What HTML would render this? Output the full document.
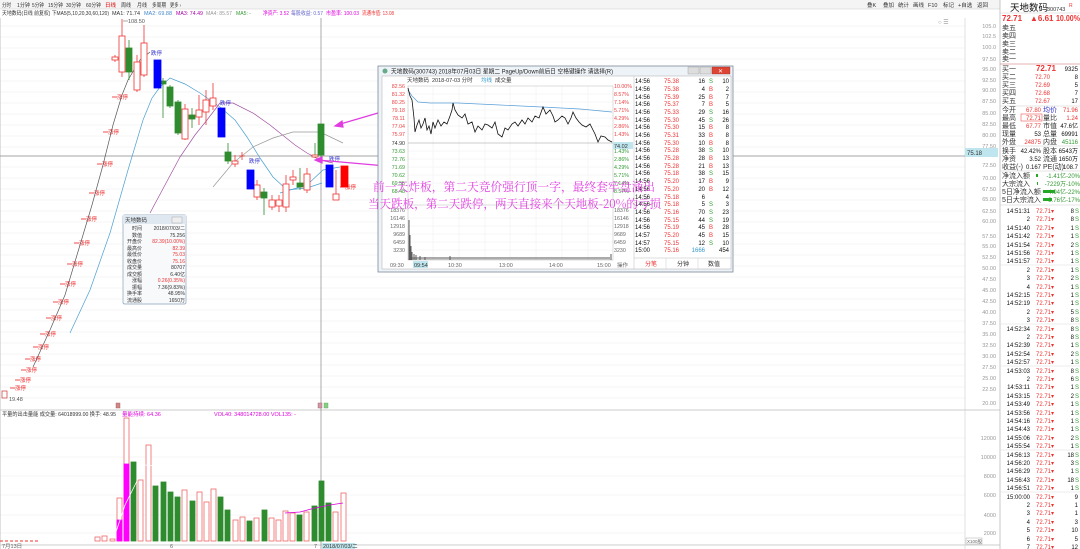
<!DOCTYPE html>
<html><head><meta charset="utf-8">
<style>
html,body{margin:0;padding:0;background:#fff;width:1080px;height:549px;overflow:hidden}
svg{display:block;font-family:"Liberation Sans","Noto Sans CJK SC",sans-serif}
</style></head><body>
<svg width="1080" height="549" viewBox="0 0 1080 549" xmlns="http://www.w3.org/2000/svg">
<rect width="1080" height="549" fill="#fff"/>
<rect x="0" y="0" width="1000" height="9" fill="#f4f4f4"/>
<line x1="0" y1="9" x2="1000" y2="9" stroke="#ccc" stroke-width="0.6"/>
<g font-size="5.5" fill="#333" lengthAdjust="spacingAndGlyphs">
<text x="2" y="7" textLength="9" lengthAdjust="spacingAndGlyphs">分时</text><text x="17" y="7" textLength="13" lengthAdjust="spacingAndGlyphs">1分钟</text><text x="32" y="7" textLength="12" lengthAdjust="spacingAndGlyphs">5分钟</text><text x="48" y="7" textLength="15" lengthAdjust="spacingAndGlyphs">15分钟</text><text x="66" y="7" textLength="15" lengthAdjust="spacingAndGlyphs">30分钟</text><text x="86" y="7" textLength="15" lengthAdjust="spacingAndGlyphs">60分钟</text>
<text x="105" y="7" fill="#d00" textLength="11" lengthAdjust="spacingAndGlyphs">日线</text><text x="121" y="7" textLength="10" lengthAdjust="spacingAndGlyphs">周线</text><text x="137" y="7" textLength="10" lengthAdjust="spacingAndGlyphs">月线</text><text x="152" y="7" textLength="14" lengthAdjust="spacingAndGlyphs">多周期</text><text x="170" y="7" textLength="11" lengthAdjust="spacingAndGlyphs">更多 ›</text>
<text x="867" y="7">叠K</text><text x="883" y="7">叠加</text><text x="898" y="7">统计</text><text x="913" y="7">画线</text><text x="928" y="7">F10</text><text x="943" y="7">标记</text><text x="958" y="7">+自选</text><text x="977" y="7">返回</text>
</g>
<g font-size="5.5">
<text x="2" y="15" fill="#333" textLength="107" lengthAdjust="spacingAndGlyphs">天地数码(日线 前复权) 下MA5(5,10,20,30,60,120)</text>
<text x="112" y="15" fill="#333" textLength="28" lengthAdjust="spacingAndGlyphs">MA1: 71.74</text>
<text x="144" y="15" fill="#48c" textLength="28" lengthAdjust="spacingAndGlyphs">MA2: 69.88</text>
<text x="176" y="15" fill="#a0a" textLength="27" lengthAdjust="spacingAndGlyphs">MA3: 74.49</text>
<text x="206" y="15" fill="#999" textLength="26" lengthAdjust="spacingAndGlyphs">MA4: 85.57</text>
<text x="219" y="15" fill="#393" textLength="0"></text>
<text x="236" y="15" fill="#393" textLength="15" lengthAdjust="spacingAndGlyphs">MA5: -</text>
<text x="253" y="15" fill="#6cc" textLength="0"></text>
<text x="263" y="15" fill="#d0d" textLength="26" lengthAdjust="spacingAndGlyphs">净资产: 3.52</text>
<text x="291" y="15" fill="#66c" textLength="32" lengthAdjust="spacingAndGlyphs">每股收益: 0.57</text>
<text x="326" y="15" fill="#d0d" textLength="33" lengthAdjust="spacingAndGlyphs">市盈率: 100.03</text>
<text x="362" y="15" fill="#e33" textLength="32" lengthAdjust="spacingAndGlyphs">流通市值: 13.08</text>
</g>
<text x="938" y="24" font-size="6" fill="#999">○ ☰</text>
<g stroke="#eee" stroke-width="0.6">
<line x1="0" y1="26" x2="965" y2="26"/><line x1="0" y1="37" x2="965" y2="37"/><line x1="0" y1="48" x2="965" y2="48"/><line x1="0" y1="59" x2="965" y2="59"/><line x1="0" y1="70" x2="965" y2="70"/><line x1="0" y1="81" x2="965" y2="81"/><line x1="0" y1="92" x2="965" y2="92"/><line x1="0" y1="103" x2="965" y2="103"/><line x1="0" y1="114" x2="965" y2="114"/><line x1="0" y1="125" x2="965" y2="125"/><line x1="0" y1="136" x2="965" y2="136"/><line x1="0" y1="147" x2="965" y2="147"/><line x1="0" y1="167" x2="965" y2="167"/><line x1="0" y1="178" x2="965" y2="178"/><line x1="0" y1="189" x2="965" y2="189"/><line x1="0" y1="200" x2="965" y2="200"/><line x1="0" y1="211" x2="965" y2="211"/><line x1="0" y1="222" x2="965" y2="222"/><line x1="0" y1="233" x2="965" y2="233"/><line x1="0" y1="244" x2="965" y2="244"/><line x1="0" y1="255" x2="965" y2="255"/><line x1="0" y1="266" x2="965" y2="266"/><line x1="0" y1="277" x2="965" y2="277"/><line x1="0" y1="288" x2="965" y2="288"/><line x1="0" y1="299" x2="965" y2="299"/><line x1="0" y1="310" x2="965" y2="310"/><line x1="0" y1="321" x2="965" y2="321"/><line x1="0" y1="332" x2="965" y2="332"/><line x1="0" y1="343" x2="965" y2="343"/><line x1="0" y1="354" x2="965" y2="354"/><line x1="0" y1="365" x2="965" y2="365"/><line x1="0" y1="376" x2="965" y2="376"/><line x1="0" y1="387" x2="965" y2="387"/><line x1="0" y1="398" x2="965" y2="398"/>
<line x1="0" y1="438" x2="965" y2="438"/><line x1="0" y1="457" x2="965" y2="457"/><line x1="0" y1="476" x2="965" y2="476"/><line x1="0" y1="495" x2="965" y2="495"/><line x1="0" y1="515" x2="965" y2="515"/><line x1="0" y1="533" x2="965" y2="533"/>
</g>
<line x1="0" y1="410" x2="1000" y2="410" stroke="#bbb" stroke-width="0.8"/>
<line x1="0" y1="545" x2="1000" y2="545" stroke="#bbb" stroke-width="0.8"/>
<line x1="965" y1="18" x2="965" y2="549" stroke="#ccc" stroke-width="0.6"/>
<line x1="1000" y1="0" x2="1000" y2="549" stroke="#bbb" stroke-width="0.8"/>
<line x1="0.5" y1="18" x2="0.5" y2="549" stroke="#ccc" stroke-width="0.6"/>
<line x1="321" y1="18" x2="321" y2="549" stroke="#888" stroke-width="0.7"/>
<line x1="0" y1="156" x2="965" y2="156" stroke="#888" stroke-width="0.7"/>
<g font-size="5.5" fill="#999" text-anchor="end">
<text x="996" y="28">105.0</text><text x="996" y="38">102.5</text><text x="996" y="49">100.0</text><text x="996" y="61">97.50</text><text x="996" y="71">95.00</text><text x="996" y="82">92.50</text><text x="996" y="92">90.00</text><text x="996" y="103">87.50</text><text x="996" y="115">85.00</text><text x="996" y="126">82.50</text><text x="996" y="137">80.00</text><text x="996" y="148">77.50</text><text x="996" y="167">72.50</text><text x="996" y="180">70.00</text><text x="996" y="191">67.50</text><text x="996" y="201">65.00</text><text x="996" y="213">62.50</text><text x="996" y="223">60.00</text><text x="996" y="238">57.50</text><text x="996" y="248">55.00</text><text x="996" y="259">52.50</text><text x="996" y="270">50.00</text><text x="996" y="281">47.50</text><text x="996" y="292">45.00</text><text x="996" y="303">42.50</text><text x="996" y="314">40.00</text><text x="996" y="325">37.50</text><text x="996" y="336">35.00</text><text x="996" y="347">32.50</text><text x="996" y="358">30.00</text><text x="996" y="369">27.50</text><text x="996" y="380">25.00</text><text x="996" y="391">22.50</text><text x="996" y="405">20.00</text>
<text x="996" y="440">12000</text><text x="996" y="459">10000</text><text x="996" y="478">8000</text><text x="996" y="497">6000</text><text x="996" y="517">4000</text><text x="996" y="535">2000</text>
</g>
<rect x="965" y="148" width="33" height="9" fill="#bfe6ee"/>
<text x="967" y="155" font-size="6" fill="#333">75.18</text>
<rect x="966" y="538" width="16" height="6" fill="#fff" stroke="#999" stroke-width="0.4"/><text x="967" y="543" font-size="4.5" fill="#666">X100股</text>
<g font-size="5.5" fill="#e22">
<g stroke="#e22" stroke-width="0.8">
<line x1="112" y1="97" x2="117" y2="97"/><line x1="103" y1="132" x2="108" y2="132"/><line x1="97" y1="164" x2="102" y2="164"/><line x1="89" y1="193" x2="94" y2="193"/><line x1="81" y1="219" x2="86" y2="219"/><line x1="74" y1="243" x2="79" y2="243"/><line x1="67" y1="264" x2="72" y2="264"/><line x1="60" y1="284" x2="65" y2="284"/><line x1="53" y1="302" x2="58" y2="302"/><line x1="46" y1="318" x2="51" y2="318"/><line x1="40" y1="334" x2="45" y2="334"/><line x1="33" y1="347" x2="38" y2="347"/><line x1="25" y1="359" x2="30" y2="359"/><line x1="21" y1="370" x2="26" y2="370"/><line x1="15" y1="380" x2="20" y2="380"/><line x1="10" y1="388" x2="15" y2="388"/><line x1="340" y1="187" x2="345" y2="187"/>
</g>
<text x="117" y="99">涨停</text><text x="108" y="134">涨停</text><text x="102" y="166">涨停</text><text x="94" y="195">涨停</text><text x="86" y="221">涨停</text><text x="79" y="245">涨停</text><text x="72" y="266">涨停</text><text x="65" y="286">涨停</text><text x="58" y="304">涨停</text><text x="51" y="320">涨停</text><text x="45" y="336">涨停</text><text x="38" y="349">涨停</text><text x="30" y="361">涨停</text><text x="26" y="372">涨停</text><text x="20" y="382">涨停</text><text x="15" y="390">涨停</text><text x="345" y="189">涨停</text>
</g>
<rect x="2" y="391" width="5" height="7" fill="#fff" stroke="#c33" stroke-width="0.7"/>
<text x="9" y="401" font-size="5.5" fill="#555">19.48</text>
<text x="128" y="23" font-size="5.5" fill="#555">108.50</text>
<line x1="123" y1="21" x2="128" y2="21" stroke="#555" stroke-width="0.5"/>
<g fill="none" stroke-width="0.7">
<polyline stroke="#555" points="33,367 50,330 65,295 80,245 92,205 103,165 113,125 122,95 128,80 140,60 150,52"/>
<polyline stroke="#4a9fd0" points="70,333 90,290 110,233 128,170 143,120 152,98 160,87 170,78 185,84 200,93 220,107 235,120 247,137 260,158 273,177 287,190 307,188 322,183"/>
<polyline stroke="#a050a0" points="150,213 165,185 180,157 195,135 207,120 220,103 233,103 253,113 270,125 280,133 295,145 307,153 320,160 333,163"/>
<polyline stroke="#999" points="213,187 233,163 253,147 273,138 293,132 320,132 343,143"/>
<polyline stroke="#4a9fd0" points="280,193 307,185 323,170 340,167"/>
</g>
<g stroke-width="0.8">
<g stroke="#e33">
<line x1="122" y1="19" x2="122" y2="77"/><line x1="137" y1="55" x2="137" y2="92"/><line x1="144" y1="25" x2="144" y2="77"/><line x1="185" y1="104" x2="185" y2="140"/><line x1="199" y1="95" x2="199" y2="125"/><line x1="206" y1="90" x2="206" y2="125"/><line x1="213" y1="83" x2="213" y2="110"/><line x1="235" y1="155" x2="235" y2="167"/><line x1="257" y1="180" x2="257" y2="200"/><line x1="272" y1="195" x2="272" y2="210"/><line x1="279" y1="195" x2="279" y2="212"/><line x1="286" y1="175" x2="286" y2="212"/><line x1="293" y1="170" x2="293" y2="185"/><line x1="307" y1="168" x2="307" y2="193"/><line x1="336" y1="170" x2="336" y2="200"/><line x1="115" y1="55" x2="115" y2="62"/>
</g>
<g stroke="#2e8b2e">
<line x1="129" y1="40" x2="129" y2="80"/><line x1="163" y1="78" x2="163" y2="118"/><line x1="170" y1="85" x2="170" y2="108"/><line x1="178" y1="100" x2="178" y2="135"/><line x1="192" y1="108" x2="192" y2="128"/><line x1="228" y1="143" x2="228" y2="164"/><line x1="264" y1="188" x2="264" y2="215"/><line x1="300" y1="168" x2="300" y2="190"/><line x1="315" y1="143" x2="315" y2="158"/><line x1="321" y1="124" x2="321" y2="158"/>
</g>
<g fill="#fff" stroke="#e33">
<rect x="119" y="36" width="6" height="36"/><rect x="134" y="62" width="6" height="28"/><rect x="141" y="43" width="6" height="32"/><rect x="182" y="109" width="6" height="30"/><rect x="196" y="110" width="6" height="7"/><rect x="203" y="100" width="6" height="12"/><rect x="210" y="98" width="6" height="8"/><rect x="232" y="161" width="6" height="3"/><rect x="254" y="185" width="6" height="12"/><rect x="269" y="200" width="6" height="7"/><rect x="276" y="200" width="6" height="6"/><rect x="283" y="184" width="6" height="23"/><rect x="290" y="177" width="6" height="3"/><rect x="304" y="174" width="6" height="16"/><rect x="333" y="194" width="6" height="6"/><rect x="112" y="57" width="6" height="3"/><rect x="312" y="155" width="6" height="2"/>
</g>
<g fill="#2e8b2e" stroke="#2e8b2e">
<rect x="126" y="48" width="6" height="24"/><rect x="160" y="81" width="6" height="3"/><rect x="167" y="87" width="6" height="19"/><rect x="175" y="102" width="6" height="31"/><rect x="189" y="115" width="6" height="4"/><rect x="225" y="152" width="6" height="9"/><rect x="261" y="192" width="6" height="6"/><rect x="297" y="183" width="6" height="4"/><rect x="318" y="124" width="6" height="31"/>
</g>
<line x1="239" y1="156" x2="245" y2="156" stroke="#e33"/><line x1="242" y1="152" x2="242" y2="160" stroke="#e33"/>
<g fill="#00f" stroke="#00f"><rect x="154" y="60" width="7" height="28"/><rect x="218" y="108" width="7" height="29"/><rect x="247" y="170" width="7" height="19"/><rect x="326" y="165" width="7" height="22"/></g>
<rect x="341" y="166" width="7" height="21" fill="#f00" stroke="#f00"/>
</g>
<g font-size="5.5" fill="#33c"><text x="151" y="55">跌停</text><text x="220" y="105">跌停</text><text x="249" y="163">跌停</text><text x="329" y="161">跌停</text></g>
<g>
<rect x="123" y="215" width="63" height="89" fill="#f7f9fb" stroke="#8aa0b8" stroke-width="0.7" rx="1.5"/>
<rect x="123" y="215" width="63" height="9" fill="#dfe7f0"/>
<text x="125" y="222" font-size="5.5" fill="#333">天地数码</text>
<rect x="172" y="217" width="10" height="6" fill="#eee" stroke="#999" stroke-width="0.4"/>
<g font-size="5" fill="#333">
<text x="142" y="230" text-anchor="end">时间</text><text x="142" y="237" text-anchor="end">数值</text><text x="142" y="243" text-anchor="end">开盘价</text><text x="142" y="250" text-anchor="end">最高价</text><text x="142" y="256" text-anchor="end">最低价</text><text x="142" y="263" text-anchor="end">收盘价</text><text x="142" y="269" text-anchor="end">成交量</text><text x="142" y="276" text-anchor="end">成交额</text><text x="142" y="282" text-anchor="end">涨幅</text><text x="142" y="289" text-anchor="end">振幅</text><text x="142" y="295" text-anchor="end">换手率</text><text x="142" y="302" text-anchor="end">流通股</text>
<text x="185" y="230" text-anchor="end">2018/07/03/二</text><text x="185" y="237" text-anchor="end">75.256</text>
<text x="185" y="243" text-anchor="end" fill="#e33">82.39(10.00%)</text><text x="185" y="250" text-anchor="end" fill="#e33">82.39</text><text x="185" y="256" text-anchor="end" fill="#e33">75.03</text><text x="185" y="263" text-anchor="end" fill="#e33">75.16</text>
<text x="185" y="269" text-anchor="end">80707</text><text x="185" y="276" text-anchor="end">6.40亿</text><text x="185" y="282" text-anchor="end" fill="#e33">0.26(0.35%)</text><text x="185" y="289" text-anchor="end">7.36(9.83%)</text><text x="185" y="295" text-anchor="end">48.95%</text><text x="185" y="302" text-anchor="end">1650万</text>
</g></g>
<g font-size="5.5"><text x="2" y="416" fill="#333" textLength="114" lengthAdjust="spacingAndGlyphs">平量的出击量能  成交量: 64018999.00 换手: 48.95</text><text x="122" y="416" fill="#d0d">量能持续: 64.36</text><text x="214" y="416" fill="#d0d">VOL40: 348014728.00 VOL135: -</text></g>
<rect x="116" y="403" width="4" height="5" fill="#c88" stroke="#a55" stroke-width="0.4"/>
<rect x="318" y="403" width="4" height="5" fill="#c9a" stroke="#a55" stroke-width="0.4"/><rect x="324" y="403" width="4" height="5" fill="#8c8" stroke="#5a5" stroke-width="0.4"/>
<g stroke-width="0.8">
<g fill="#fff" stroke="#e66">
<rect x="117" y="498" width="5" height="43"/><rect x="124" y="418" width="5" height="123"/><rect x="138" y="480" width="5" height="61"/><rect x="146" y="445" width="5" height="96"/><rect x="182" y="490" width="5" height="51"/><rect x="197" y="492" width="5" height="49"/><rect x="204" y="502" width="5" height="39"/><rect x="211" y="489" width="5" height="52"/><rect x="233" y="520" width="5" height="21"/><rect x="240" y="517" width="5" height="24"/><rect x="254" y="518" width="5" height="23"/><rect x="269" y="518" width="5" height="23"/><rect x="276" y="520" width="5" height="21"/><rect x="283" y="511" width="5" height="30"/><rect x="290" y="513" width="5" height="28"/><rect x="304" y="512" width="5" height="29"/><rect x="333" y="512" width="5" height="29"/><rect x="341" y="493" width="5" height="48"/><rect x="95" y="537" width="5" height="4"/><rect x="102" y="536" width="5" height="5"/><rect x="110" y="539" width="5" height="2"/>
</g>
<rect x="117" y="520" width="5" height="21" fill="#f0f" stroke="#f0f"/>
<rect x="124" y="464" width="5" height="77" fill="#f0f" stroke="#f0f"/>
<g fill="#2e8b2e" stroke="#2e8b2e">
<rect x="131" y="462" width="5" height="79"/><rect x="153" y="486" width="5" height="55"/><rect x="161" y="482" width="5" height="59"/><rect x="168" y="492" width="5" height="49"/><rect x="175" y="497" width="5" height="44"/><rect x="190" y="501" width="5" height="40"/><rect x="218" y="497" width="5" height="44"/><rect x="225" y="510" width="5" height="31"/><rect x="247" y="521" width="5" height="20"/><rect x="262" y="510" width="5" height="31"/><rect x="297" y="515" width="5" height="26"/><rect x="312" y="506" width="5" height="35"/><rect x="319" y="481" width="5" height="60"/><rect x="326" y="503" width="5" height="38"/>
</g>
</g>
<line x1="0" y1="541" x2="40" y2="541" stroke="#e33" stroke-width="1" stroke-dasharray="3,2"/>
<polyline fill="none" stroke="#d0d" stroke-width="0.8" points="285,513 300,512 315,508 330,505 343,503"/>
<polyline fill="none" stroke="#fff" stroke-width="0.8" points="115,535 125,505 135,485 145,465 155,466"/>
<g font-size="5.5" fill="#666"><text x="2" y="548">7月13日</text><text x="170" y="548">6</text><text x="314" y="548">7</text></g>
<rect x="322" y="543" width="33" height="6" fill="#bfe6ee"/><text x="323" y="548" font-size="5.5" fill="#333">2018/07/03/二</text>
<g stroke="#e03ce0" stroke-width="1.2" fill="#e03ce0">
<line x1="378" y1="113" x2="337" y2="125"/><polygon points="335,126 342,121 343,127"/>
<line x1="455" y1="172" x2="318" y2="160"/><polygon points="315,160 322,157 322,163"/>
</g>
<g>
<rect x="378" y="66" width="355" height="206" fill="#eef3f8" stroke="#7a8a9a" stroke-width="0.8"/>
<text x="391" y="73.5" font-size="6" fill="#222" textLength="222" lengthAdjust="spacingAndGlyphs">天地数码(300743) 2018年07月03日 星期二 PageUp/Down前后日 空格键操作 请选择(R)</text>
<circle cx="385" cy="71" r="2.5" fill="#6a8"/>
<rect x="688" y="67" width="11" height="7" fill="#ddd" stroke="#999" stroke-width="0.4"/><rect x="700" y="67" width="11" height="7" fill="#ddd" stroke="#999" stroke-width="0.4"/><rect x="712" y="67" width="18" height="7" fill="#d43" stroke="#933" stroke-width="0.4"/>
<text x="718" y="73" font-size="6" fill="#fff">✕</text>
<rect x="382" y="76" width="349" height="193" fill="#fff" stroke="#aaa" stroke-width="0.5"/>
<g font-size="5.5" fill="#333"><text x="407" y="82">天地数码</text><text x="432" y="82">2018-07-03 分时</text><text x="481" y="82" fill="#39c">均线</text><text x="495" y="82">成交量</text></g>
<g stroke="#eee" stroke-width="0.5">
<line x1="408" y1="94" x2="613" y2="94"/><line x1="408" y1="102" x2="613" y2="102"/><line x1="408" y1="110" x2="613" y2="110"/><line x1="408" y1="118" x2="613" y2="118"/><line x1="408" y1="126" x2="613" y2="126"/><line x1="408" y1="134" x2="613" y2="134"/><line x1="408" y1="151" x2="613" y2="151"/><line x1="408" y1="159" x2="613" y2="159"/><line x1="408" y1="167" x2="613" y2="167"/><line x1="408" y1="175" x2="613" y2="175"/><line x1="408" y1="183" x2="613" y2="183"/><line x1="408" y1="191" x2="613" y2="191"/><line x1="408" y1="218" x2="613" y2="218"/><line x1="408" y1="226" x2="613" y2="226"/><line x1="408" y1="234" x2="613" y2="234"/><line x1="408" y1="242" x2="613" y2="242"/><line x1="408" y1="250" x2="613" y2="250"/>
<line x1="433" y1="86" x2="433" y2="260"/><line x1="459" y1="86" x2="459" y2="260"/><line x1="485" y1="86" x2="485" y2="260"/><line x1="510" y1="86" x2="510" y2="260"/><line x1="536" y1="86" x2="536" y2="260"/><line x1="562" y1="86" x2="562" y2="260"/><line x1="588" y1="86" x2="588" y2="260"/>
</g>
<rect x="408" y="86" width="205" height="174" fill="none" stroke="#bbb" stroke-width="0.5"/>
<line x1="408" y1="143" x2="613" y2="143" stroke="#999" stroke-width="0.5"/>
<line x1="408" y1="205" x2="613" y2="205" stroke="#bbb" stroke-width="0.5"/>
<g font-size="5.3">
<g fill="#e44" text-anchor="end"><text x="405" y="88">82.56</text><text x="405" y="96">81.32</text><text x="405" y="104">80.25</text><text x="405" y="112">79.18</text><text x="405" y="120">78.11</text><text x="405" y="128">77.04</text><text x="405" y="136">75.97</text></g>
<text x="405" y="145" text-anchor="end" fill="#333">74.90</text>
<g fill="#393" text-anchor="end"><text x="405" y="153">73.63</text><text x="405" y="161">72.76</text><text x="405" y="169">71.69</text><text x="405" y="177">70.62</text><text x="405" y="185">69.55</text><text x="405" y="193">68.48</text></g>
<g fill="#666" text-anchor="end"><text x="405" y="212">18376</text><text x="405" y="220">16146</text><text x="405" y="228">12918</text><text x="405" y="236">9689</text><text x="405" y="244">6459</text><text x="405" y="252">3230</text></g>
<g fill="#e44"><text x="614" y="88">10.00%</text><text x="614" y="96">8.57%</text><text x="614" y="104">7.14%</text><text x="614" y="112">5.71%</text><text x="614" y="120">4.29%</text><text x="614" y="128">2.86%</text><text x="614" y="136">1.43%</text></g>
<g fill="#393"><text x="614" y="153">1.43%</text><text x="614" y="161">2.86%</text><text x="614" y="169">4.29%</text><text x="614" y="177">5.71%</text><text x="614" y="185">7.14%</text><text x="614" y="193">8.57%</text></g>
<g fill="#666"><text x="614" y="212">18376</text><text x="614" y="220">16146</text><text x="614" y="228">12918</text><text x="614" y="236">9689</text><text x="614" y="244">6459</text><text x="614" y="252">3230</text></g>
</g>
<rect x="613" y="142" width="20" height="7" fill="#bfe6ee"/><text x="614" y="148" font-size="5.5" fill="#333">74.02</text>
<polyline fill="none" stroke="#5a9fd8" stroke-width="0.7" points="408,90 412,96 418,102 430,103 458,103 500,105 542,107 580,109 612,112"/>
<polyline fill="none" stroke="#111" stroke-width="0.8" points="408,88 410,96 412,100 414,118 415,132 417,125 419,120 421,128 423,124 425,118 427,130 429,126 431,134 433,122 435,128 438,120 441,126 444,122 447,124 450,116 452,110 453,103 455,110 458,115 462,118 465,114 468,124 472,122 475,132 478,126 482,130 485,124 488,125 492,128 495,122 498,134 502,137 505,128 508,130 512,124 515,122 518,126 522,120 525,124 528,118 532,122 535,116 539,118 543,107 546,114 550,110 553,116 555,122 558,120 562,116 565,118 568,124 571,118 573,112 576,118 579,122 582,125 586,127 590,124 592,128 595,134 598,142 601,136 605,137 608,140 612,142"/>
<g stroke="#333" stroke-width="0.8">
<line x1="409" y1="260" x2="409" y2="220"/><line x1="410" y1="260" x2="410" y2="235"/><line x1="411" y1="260" x2="411" y2="246"/><line x1="412" y1="260" x2="412" y2="252"/><line x1="414" y1="260" x2="414" y2="254"/><line x1="416" y1="260" x2="416" y2="255"/><line x1="420" y1="260" x2="420" y2="256"/><line x1="425" y1="260" x2="425" y2="257"/><line x1="450" y1="260" x2="450" y2="256"/><line x1="611" y1="260" x2="611" y2="254"/>
</g>
<rect x="410" y="257" width="200" height="2.5" fill="#555" opacity="0.5"/>
<g font-size="5.5" fill="#666"><text x="390" y="267">09:30</text><text x="448" y="267">10:30</text><text x="499" y="267">13:00</text><text x="549" y="267">14:00</text><text x="597" y="267">15:00</text><text x="617" y="267">操作</text></g>
<rect x="413" y="261" width="15" height="7" fill="#bfe6ee"/><text x="414" y="267" font-size="5.5" fill="#333">09:54</text>
<line x1="634" y1="76" x2="634" y2="269" stroke="#bbb" stroke-width="0.5"/>
<g font-size="6">
<g fill="#111"><text x="635" y="83">14:56</text><text x="635" y="91">14:56</text><text x="635" y="99">14:56</text><text x="635" y="106">14:56</text><text x="635" y="114">14:56</text><text x="635" y="122">14:56</text><text x="635" y="129">14:56</text><text x="635" y="137">14:56</text><text x="635" y="145">14:56</text><text x="635" y="152">14:56</text><text x="635" y="160">14:56</text><text x="635" y="168">14:56</text><text x="635" y="175">14:56</text><text x="635" y="183">14:56</text><text x="635" y="191">14:56</text><text x="635" y="199">14:56</text><text x="635" y="206">14:56</text><text x="635" y="214">14:56</text><text x="635" y="222">14:56</text><text x="635" y="229">14:56</text><text x="635" y="237">14:57</text><text x="635" y="245">14:57</text><text x="635" y="252">15:00</text></g>
<g fill="#e33"><text x="664" y="83">75.38</text><text x="664" y="91">75.38</text><text x="664" y="99">75.39</text><text x="664" y="106">75.37</text><text x="664" y="114">75.33</text><text x="664" y="122">75.30</text><text x="664" y="129">75.30</text><text x="664" y="137">75.31</text><text x="664" y="145">75.30</text><text x="664" y="152">75.28</text><text x="664" y="160">75.28</text><text x="664" y="168">75.28</text><text x="664" y="175">75.18</text><text x="664" y="183">75.20</text><text x="664" y="191">75.20</text><text x="664" y="199">75.18</text><text x="664" y="206">75.18</text><text x="664" y="214">75.16</text><text x="664" y="222">75.15</text><text x="664" y="229">75.19</text><text x="664" y="237">75.20</text><text x="664" y="245">75.15</text><text x="664" y="252">75.16</text></g>
<g fill="#111" text-anchor="end"><text x="705" y="83">16</text><text x="705" y="91">4</text><text x="705" y="99">25</text><text x="705" y="106">7</text><text x="705" y="114">29</text><text x="705" y="122">45</text><text x="705" y="129">15</text><text x="705" y="137">33</text><text x="705" y="145">10</text><text x="705" y="152">38</text><text x="705" y="160">28</text><text x="705" y="168">21</text><text x="705" y="175">38</text><text x="705" y="183">17</text><text x="705" y="191">20</text><text x="705" y="199">6</text><text x="705" y="206">5</text><text x="705" y="214">70</text><text x="705" y="222">44</text><text x="705" y="229">45</text><text x="705" y="237">45</text><text x="705" y="245">12</text><text x="705" y="252" fill="#39c">1666</text></g>
<g><text x="709" y="83" fill="#393">S</text><text x="709" y="91" fill="#e33">B</text><text x="709" y="99" fill="#e33">B</text><text x="709" y="106" fill="#e33">B</text><text x="709" y="114" fill="#393">S</text><text x="709" y="122" fill="#393">S</text><text x="709" y="129" fill="#e33">B</text><text x="709" y="137" fill="#e33">B</text><text x="709" y="145" fill="#e33">B</text><text x="709" y="152" fill="#393">S</text><text x="709" y="160" fill="#e33">B</text><text x="709" y="168" fill="#e33">B</text><text x="709" y="175" fill="#393">S</text><text x="709" y="183" fill="#e33">B</text><text x="709" y="191" fill="#e33">B</text><text x="709" y="206" fill="#393">S</text><text x="709" y="214" fill="#393">S</text><text x="709" y="222" fill="#393">S</text><text x="709" y="229" fill="#e33">B</text><text x="709" y="237" fill="#e33">B</text><text x="709" y="245" fill="#393">S</text></g>
<g fill="#111" text-anchor="end"><text x="729" y="83">10</text><text x="729" y="91">2</text><text x="729" y="99">7</text><text x="729" y="106">5</text><text x="729" y="114">16</text><text x="729" y="122">26</text><text x="729" y="129">8</text><text x="729" y="137">8</text><text x="729" y="145">8</text><text x="729" y="152">10</text><text x="729" y="160">13</text><text x="729" y="168">13</text><text x="729" y="175">15</text><text x="729" y="183">9</text><text x="729" y="191">12</text><text x="729" y="199">4</text><text x="729" y="206">3</text><text x="729" y="214">23</text><text x="729" y="222">19</text><text x="729" y="229">28</text><text x="729" y="237">15</text><text x="729" y="245">10</text><text x="729" y="252">454</text></g>
</g>
<line x1="634" y1="258" x2="731" y2="258" stroke="#bbb" stroke-width="0.5"/>
<line x1="666" y1="258" x2="666" y2="269" stroke="#ccc" stroke-width="0.5"/><line x1="698" y1="258" x2="698" y2="269" stroke="#ccc" stroke-width="0.5"/>
<g font-size="6"><text x="645" y="266" fill="#e33">分笔</text><text x="677" y="266" fill="#333">分钟</text><text x="708" y="266" fill="#333">数值</text></g>
</g>
<g font-family="'Noto Serif CJK SC','Liberation Serif',serif" font-size="12" fill="#e040e0">
<text x="373" y="191" textLength="282" lengthAdjust="spacingAndGlyphs">前一天炸板，第二天竞价强行顶一字，最终套牢盘涌出</text>
<text x="368" y="208" textLength="293" lengthAdjust="spacingAndGlyphs">当天跌板，第二天跌停，两天直接来个天地板-20%的亏损</text>
</g>
<g font-size="7.5">
<text x="1010" y="11" font-size="9.5" fill="#111">天地数码</text><text x="1047" y="11" font-size="5.5" fill="#333">300743</text><text x="1069" y="7" font-size="5" fill="#e33">R</text>
<line x1="1000" y1="13" x2="1080" y2="13" stroke="#ccc" stroke-width="0.5"/>
<g font-weight="bold" fill="#e33" font-size="8"><text x="1002" y="21">72.71</text><text x="1030" y="21">▲6.61</text><text x="1056" y="21" textLength="24" lengthAdjust="spacingAndGlyphs">10.00%</text></g>
<g fill="#333" font-size="7"><text x="1002" y="30">卖五</text><text x="1002" y="38">卖四</text><text x="1002" y="46">卖三</text><text x="1002" y="54">卖二</text><text x="1002" y="61">卖一</text></g>
<line x1="1000" y1="64" x2="1080" y2="64" stroke="#c66" stroke-width="0.6"/>
<g fill="#333" font-size="7"><text x="1002" y="71">买一</text><text x="1002" y="79">买二</text><text x="1002" y="87">买三</text><text x="1002" y="95">买四</text><text x="1002" y="103">买五</text></g>
<g fill="#e33" text-anchor="end"><text x="1056" y="71" font-weight="bold" font-size="8">72.71</text><text x="1050" y="79" font-size="6">72.70</text><text x="1050" y="87" font-size="6">72.69</text><text x="1050" y="95" font-size="6">72.68</text><text x="1050" y="103" font-size="6">72.67</text></g>
<g fill="#111" text-anchor="end" font-size="6"><text x="1078" y="71">9325</text><text x="1078" y="79">8</text><text x="1078" y="87">5</text><text x="1078" y="95">7</text><text x="1078" y="103">17</text></g>
<line x1="1000" y1="106" x2="1080" y2="106" stroke="#ccc" stroke-width="0.5"/>
<g fill="#333" font-size="7"><text x="1002" y="112">今开</text><text x="1002" y="120">最高</text><text x="1002" y="128">最低</text><text x="1002" y="136">现量</text><text x="1002" y="144">外盘</text>
<text x="1043" y="112" fill="#33c">均价</text><text x="1043" y="120">量比</text><text x="1043" y="128">市值</text><text x="1043" y="136">总量</text><text x="1043" y="144">内盘</text></g>
<g text-anchor="end" font-size="6"><text x="1041" y="112" fill="#e33">67.80</text><text x="1041" y="120" fill="#e33">72.71</text><text x="1041" y="128" fill="#e33">67.77</text><text x="1041" y="136" fill="#111">53</text><text x="1041" y="144" fill="#e33">24875</text>
<text x="1078" y="112" fill="#e33">71.96</text><text x="1078" y="120" fill="#e33">1.24</text><text x="1078" y="128" fill="#111">47.6亿</text><text x="1078" y="136" fill="#111">69991</text><text x="1078" y="144" fill="#393">45116</text></g>
<rect x="1021" y="114" width="21" height="7" fill="none" stroke="#e33" stroke-width="0.5"/>
<line x1="1000" y1="146" x2="1080" y2="146" stroke="#ccc" stroke-width="0.5"/>
<g fill="#333" font-size="7"><text x="1002" y="153">换手</text><text x="1002" y="161">净资</text><text x="1002" y="169">收益(-)</text><text x="1043" y="153">股本</text><text x="1043" y="161">流通</text><text x="1043" y="169">PE(动)</text></g>
<g text-anchor="end" font-size="6" fill="#111"><text x="1041" y="153">42.42%</text><text x="1041" y="161">3.52</text><text x="1041" y="169">0.167</text><text x="1078" y="153">6543万</text><text x="1078" y="161">1650万</text><text x="1078" y="169">108.7</text></g>
<line x1="1000" y1="171" x2="1080" y2="171" stroke="#ccc" stroke-width="0.5"/>
<g fill="#333" font-size="7"><text x="1002" y="178">净流入额</text><text x="1002" y="186">大宗流入</text><text x="1002" y="194">5日净流入额</text><text x="1002" y="202">5日大宗流入</text></g>
<rect x="1036" y="174" width="2" height="3" fill="#2a2"/><rect x="1037" y="182" width="1" height="3" fill="#2a2"/><rect x="1043" y="190" width="12" height="3" fill="#2a2"/><rect x="1043" y="198" width="9" height="3" fill="#2a2"/>
<g text-anchor="end" font-size="6" fill="#393"><text x="1066" y="178">-1.41亿</text><text x="1066" y="186">-7229万</text><text x="1066" y="194">-4.94亿</text><text x="1066" y="202">-3.76亿</text><text x="1080" y="178">-20%</text><text x="1080" y="186">-10%</text><text x="1080" y="194">-22%</text><text x="1080" y="202">-17%</text></g>
<line x1="1000" y1="205" x2="1080" y2="205" stroke="#ccc" stroke-width="0.5"/>
</g>
<g font-size="6">
<g fill="#111" text-anchor="end">
<text x="1030" y="213">14:51:31</text><text x="1030" y="221">2</text><text x="1030" y="230">14:51:40</text><text x="1030" y="238">14:51:42</text><text x="1030" y="247">14:51:54</text><text x="1030" y="255">14:51:56</text><text x="1030" y="263">14:51:57</text><text x="1030" y="272">2</text><text x="1030" y="280">3</text><text x="1030" y="289">4</text><text x="1030" y="297">14:52:15</text><text x="1030" y="305">14:52:19</text><text x="1030" y="314">2</text><text x="1030" y="322">3</text><text x="1030" y="331">14:52:34</text><text x="1030" y="339">2</text><text x="1030" y="347">14:52:39</text><text x="1030" y="356">14:52:54</text><text x="1030" y="364">14:52:57</text><text x="1030" y="373">14:53:03</text><text x="1030" y="381">2</text><text x="1030" y="389">14:53:11</text><text x="1030" y="398">14:53:15</text><text x="1030" y="406">14:53:49</text><text x="1030" y="415">14:53:56</text><text x="1030" y="423">14:54:16</text><text x="1030" y="431">14:54:43</text><text x="1030" y="440">14:55:06</text><text x="1030" y="448">14:55:54</text><text x="1030" y="457">14:56:13</text><text x="1030" y="465">14:56:20</text><text x="1030" y="473">14:56:29</text><text x="1030" y="482">14:56:43</text><text x="1030" y="490">14:56:51</text><text x="1030" y="499">15:00:00</text><text x="1030" y="507">2</text><text x="1030" y="515">3</text><text x="1030" y="524">4</text><text x="1030" y="532">5</text><text x="1030" y="541">6</text><text x="1030" y="549">7</text>
</g>
<g fill="#e33">
<text x="1036" y="213">72.71▾</text><text x="1036" y="221">72.71▾</text><text x="1036" y="230">72.71▾</text><text x="1036" y="238">72.71▾</text><text x="1036" y="247">72.71▾</text><text x="1036" y="255">72.71▾</text><text x="1036" y="263">72.71▾</text><text x="1036" y="272">72.71▾</text><text x="1036" y="280">72.71▾</text><text x="1036" y="289">72.71▾</text><text x="1036" y="297">72.71▾</text><text x="1036" y="305">72.71▾</text><text x="1036" y="314">72.71▾</text><text x="1036" y="322">72.71▾</text><text x="1036" y="331">72.71▾</text><text x="1036" y="339">72.71▾</text><text x="1036" y="347">72.71▾</text><text x="1036" y="356">72.71▾</text><text x="1036" y="364">72.71▾</text><text x="1036" y="373">72.71▾</text><text x="1036" y="381">72.71▾</text><text x="1036" y="389">72.71▾</text><text x="1036" y="398">72.71▾</text><text x="1036" y="406">72.71▾</text><text x="1036" y="415">72.71▾</text><text x="1036" y="423">72.71▾</text><text x="1036" y="431">72.71▾</text><text x="1036" y="440">72.71▾</text><text x="1036" y="448">72.71▾</text><text x="1036" y="457">72.71▾</text><text x="1036" y="465">72.71▾</text><text x="1036" y="473">72.71▾</text><text x="1036" y="482">72.71▾</text><text x="1036" y="490">72.71▾</text><text x="1036" y="499">72.71▾</text><text x="1036" y="507">72.71▾</text><text x="1036" y="515">72.71▾</text><text x="1036" y="524">72.71▾</text><text x="1036" y="532">72.71▾</text><text x="1036" y="541">72.71▾</text><text x="1036" y="549">72.71▾</text>
</g>
<g fill="#111" text-anchor="end">
<text x="1074" y="213">8</text><text x="1074" y="221">8</text><text x="1074" y="230">1</text><text x="1074" y="238">1</text><text x="1074" y="247">2</text><text x="1074" y="255">1</text><text x="1074" y="263">1</text><text x="1074" y="272">1</text><text x="1074" y="280">2</text><text x="1074" y="289">1</text><text x="1074" y="297">1</text><text x="1074" y="305">1</text><text x="1074" y="314">5</text><text x="1074" y="322">8</text><text x="1074" y="331">8</text><text x="1074" y="339">8</text><text x="1074" y="347">1</text><text x="1074" y="356">2</text><text x="1074" y="364">1</text><text x="1074" y="373">8</text><text x="1074" y="381">6</text><text x="1074" y="389">1</text><text x="1074" y="398">2</text><text x="1074" y="406">1</text><text x="1074" y="415">1</text><text x="1074" y="423">1</text><text x="1074" y="431">1</text><text x="1074" y="440">2</text><text x="1074" y="448">1</text><text x="1074" y="457">18</text><text x="1074" y="465">3</text><text x="1074" y="473">1</text><text x="1074" y="482">18</text><text x="1074" y="490">1</text><text x="1078" y="499">9</text><text x="1078" y="507">1</text><text x="1078" y="515">1</text><text x="1078" y="524">3</text><text x="1078" y="532">10</text><text x="1078" y="541">5</text><text x="1078" y="549">12</text>
</g>
<g fill="#393"><text x="1075" y="213">S</text><text x="1075" y="221">S</text><text x="1075" y="230">S</text><text x="1075" y="238">S</text><text x="1075" y="247">S</text><text x="1075" y="255">S</text><text x="1075" y="263">S</text><text x="1075" y="272">S</text><text x="1075" y="280">S</text><text x="1075" y="289">S</text><text x="1075" y="297">S</text><text x="1075" y="305">S</text><text x="1075" y="314">S</text><text x="1075" y="322">S</text><text x="1075" y="331">S</text><text x="1075" y="339">S</text><text x="1075" y="347">S</text><text x="1075" y="356">S</text><text x="1075" y="364">S</text><text x="1075" y="373">S</text><text x="1075" y="381">S</text><text x="1075" y="389">S</text><text x="1075" y="398">S</text><text x="1075" y="406">S</text><text x="1075" y="415">S</text><text x="1075" y="423">S</text><text x="1075" y="431">S</text><text x="1075" y="440">S</text><text x="1075" y="448">S</text><text x="1075" y="457">S</text><text x="1075" y="465">S</text><text x="1075" y="473">S</text><text x="1075" y="482">S</text><text x="1075" y="490">S</text></g>
</g>
<g stroke="#ddd" stroke-width="0.5"><line x1="1000" y1="265" x2="1080" y2="265"/><line x1="1000" y1="324" x2="1080" y2="324"/><line x1="1000" y1="366" x2="1080" y2="366"/><line x1="1000" y1="450" x2="1080" y2="450"/><line x1="1000" y1="492" x2="1080" y2="492"/></g>
</svg>
</body></html>
